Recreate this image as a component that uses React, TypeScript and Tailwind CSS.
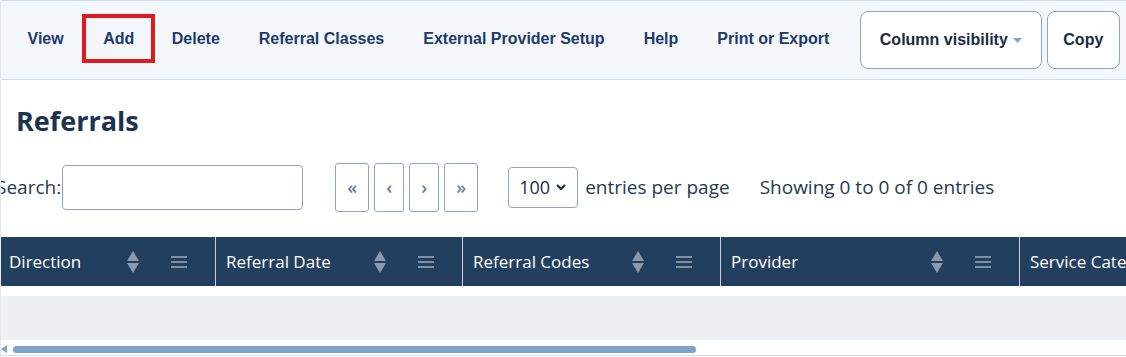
const navItems = ['View', 'Add', 'Delete', 'Referral Classes', 'External Provider Setup', 'Help', 'Print or Export']

const columns = [
  { label: 'Direction', width: 214 },
  { label: 'Referral Date', width: 247 },
  { label: 'Referral Codes', width: 258 },
  { label: 'Provider', width: 299 },
  { label: 'Service Category', width: 200 },
]

function SortIcon() {
  return (
    <svg width="12" height="22" viewBox="0 0 12 22" className="shrink-0">
      <path d="M6 0 L12 10 L0 10 Z" fill="#8a99ad" />
      <path d="M6 22 L12 12 L0 12 Z" fill="#8a99ad" />
    </svg>
  )
}

function MenuIcon() {
  return (
    <svg width="16" height="14" viewBox="0 0 16 14" className="shrink-0">
      <rect x="0" y="1" width="16" height="2" fill="#7f90a6" />
      <rect x="0" y="6" width="16" height="2" fill="#7f90a6" />
      <rect x="0" y="11" width="16" height="2" fill="#7f90a6" />
    </svg>
  )
}

export default function App() {
  return (
    <div className="w-[1126px] h-[357px] overflow-hidden bg-white border-l border-[#e3e8ef]" style={{ fontFamily: '"Open Sans", sans-serif' }}>
      {/* toolbar */}
      <div className="h-[80px] bg-[#f3f6fb] border-y border-[#cfdaea] flex items-center pl-[7px]" style={{ fontFamily: '"Liberation Sans", Arial, sans-serif' }}>
        {navItems.map((item) => (
          <div
            key={item}
            className={
              item === 'Add'
                ? 'h-[49px] mb-[3px] ml-[-1px] mr-[-3px] px-[17px] border-4 border-[#e0191f] flex items-center text-[16px] font-bold text-[#1e3a6b]'
                : 'h-[49px] mb-[3px] px-[19.5px] flex items-center text-[16px] font-bold text-[#1e3a6b]'
            }
          >
            {item}
          </div>
        ))}
        <div className="ml-[11px] h-[58px] w-[182px] rounded-[8px] border border-[#8ea6c2] bg-white flex items-center justify-center gap-[5px] text-[16px] font-bold text-[#1b2b42]">
          Column visibility
          <svg width="9" height="5" viewBox="0 0 9 5"><path d="M0 0 L9 0 L4.5 5 Z" fill="#7fa3c9" /></svg>
        </div>
        <div className="ml-[5px] h-[58px] w-[73px] shrink-0 rounded-[8px] border border-[#8ea6c2] bg-white flex items-center justify-center text-[16px] font-bold text-[#1b2b42]">
          Copy
        </div>
      </div>

      {/* heading */}
      <div className="pl-[15px] pt-[24px] h-[82px]">
        <h1 className="text-[27px] font-bold text-[#1a3350] leading-[34px]">Referrals</h1>
      </div>

      {/* controls */}
      <div className="flex items-center h-[50px] ml-[-5px] text-[19px] text-[#253a52]">
        <span>Search:</span>
        <div className="ml-[1px] w-[241px] h-[45px] rounded-[4px] border border-[#8ea6c2]" />
        <div className="ml-[32px] flex gap-[5px]">
          {['«', '‹', '›', '»'].map((g, i) => (
            <div
              key={g}
              className={
                i === 0 || i === 3
                  ? 'w-[34px] h-[49px] rounded-[3px] border border-[#8ea6c2] flex items-center justify-center text-[18px] font-semibold text-[#5f7ea3]'
                  : 'w-[30px] h-[49px] rounded-[3px] border border-[#8ea6c2] flex items-center justify-center text-[18px] font-semibold text-[#5f7ea3]'
              }
            >
              {g}
            </div>
          ))}
        </div>
        <div className="ml-[30px] w-[70px] h-[41px] rounded-[4px] border border-[#8ea6c2] flex items-center pl-[10px] gap-[6px] text-[18px] text-[#1b2b42]">
          100
          <svg width="10" height="7" viewBox="0 0 10 7"><path d="M1 1 L5 5 L9 1" stroke="#1b2b42" strokeWidth="2.2" fill="none" /></svg>
        </div>
        <span className="ml-[7px]">entries per page</span>
        <span className="ml-[30px]">Showing 0 to 0 of 0 entries</span>
      </div>

      {/* table */}
      <div className="mt-[25px] flex h-[49px] bg-[#223f60] text-white text-[17px]">
        {columns.map((c, i) => (
          <div
            key={c.label}
            className={
              i === 0
                ? 'shrink-0 flex items-center pl-[8px] pr-[6px]'
                : 'shrink-0 flex items-center pl-[10px] pr-[6px] border-l border-[#c6d3e3]'
            }
            style={{ width: c.width }}
          >
            <span className="flex-1 whitespace-nowrap overflow-hidden">{c.label}</span>
            {i < 4 && (
              <div className="flex items-center gap-[32px] pr-[22px]">
                <SortIcon />
                <MenuIcon />
              </div>
            )}
          </div>
        ))}
      </div>
      <div className="h-[10px] bg-white" />
      <div className="h-[44px] bg-[#edf0f5]" />

      {/* scrollbar */}
      <div className="mt-[5px] h-[8px] flex items-center">
        <svg width="6" height="8" viewBox="0 0 6 8" className="shrink-0"><path d="M6 0 L6 8 L0 4 Z" fill="#7ea2c8" /></svg>
        <div className="ml-[6px] w-[683px] h-[7px] rounded-full bg-[#7ea2c8]" />
      </div>
      <div className="mt-[2px] h-[1px] bg-[#d4dbe4]" />
    </div>
  )
}
